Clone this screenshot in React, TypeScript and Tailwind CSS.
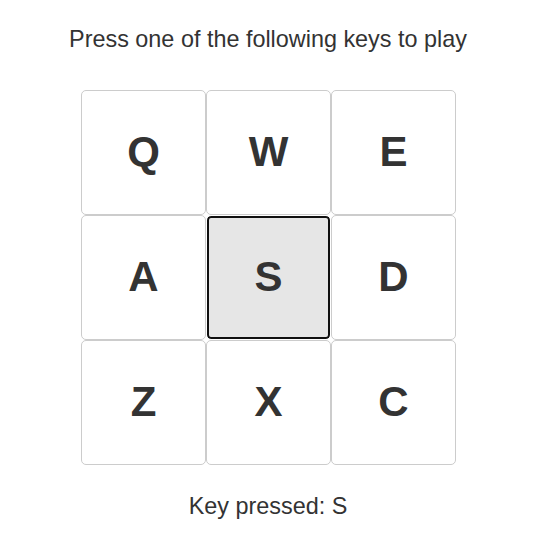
import React from "react";

const keys = ["Q", "W", "E", "A", "S", "D", "Z", "X", "C"];

export default function App() {
  return (
    <div
      className="w-[534px] h-[535px] bg-white text-[#333333] flex flex-col items-center"
      style={{ fontFamily: '"Liberation Sans", Arial, sans-serif' }}
    >
      <div className="mt-[25px] text-[23.4px] leading-[28px] ml-[2px]">
        Press one of the following keys to play
      </div>
      <div className="mt-[37px] ml-[3px] grid grid-cols-[125px_125px_125px] grid-rows-[125px_125px_125px]">
        {keys.map((k) =>
          k === "S" ? (
            <div
              key={k}
              className="flex items-center justify-center pb-[2px] rounded-[5px] border border-white bg-[#e6e6e6] shadow-[inset_0_0_0_2px_#101010] text-[42px] font-bold"
            >
              {k}
            </div>
          ) : (
            <div
              key={k}
              className="flex items-center justify-center pb-[2px] rounded-[5px] border border-[#cccccc] bg-white text-[42px] font-bold"
            >
              {k}
            </div>
          )
        )}
      </div>
      <div className="mt-[27px] text-[23.4px] leading-[28px] ml-[2px]">Key pressed: S</div>
    </div>
  );
}
